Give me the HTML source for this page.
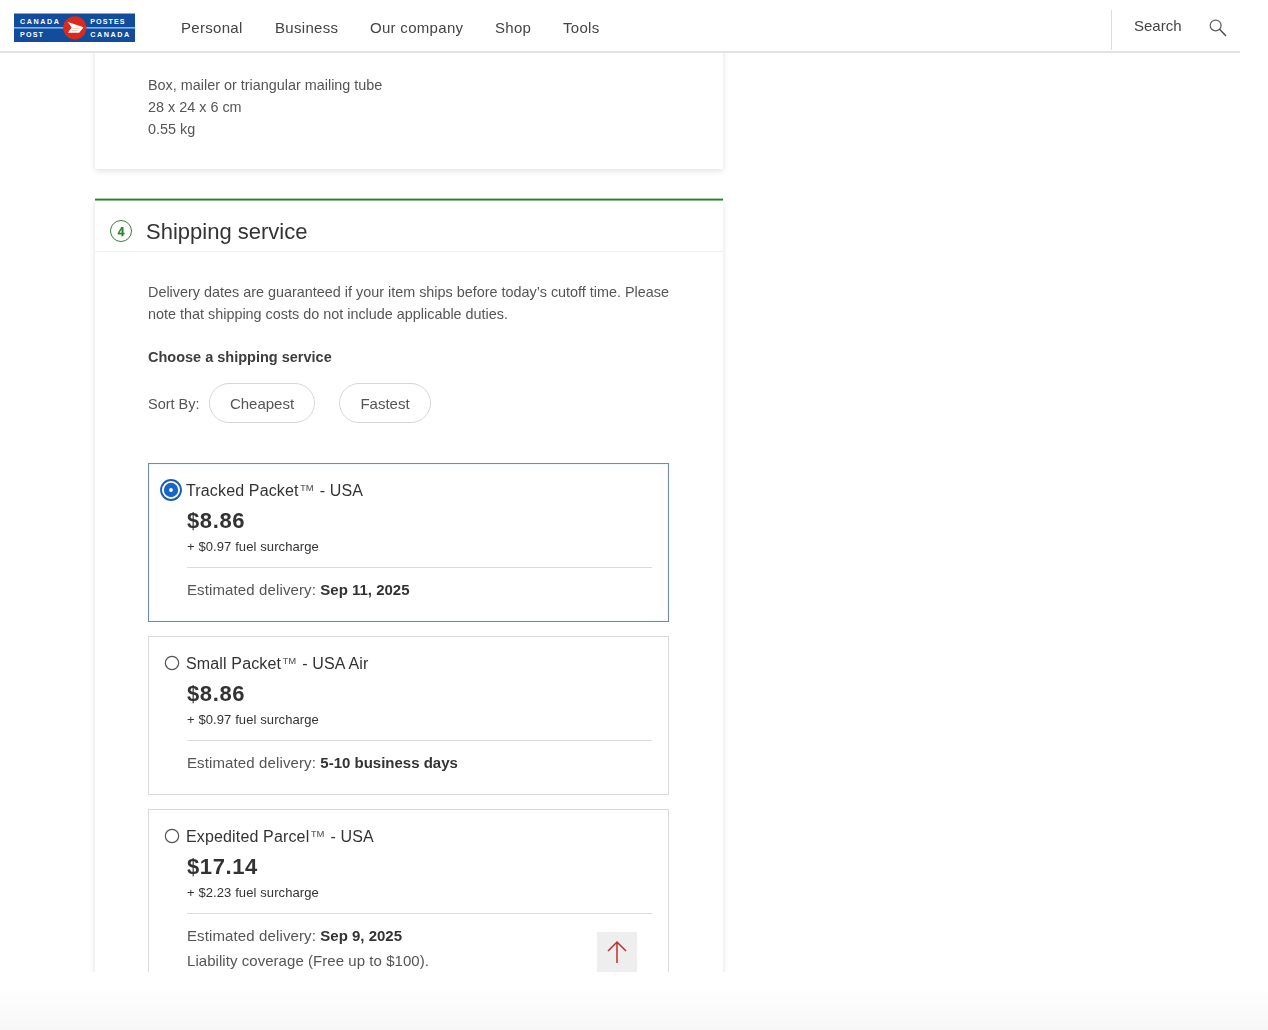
<!DOCTYPE html>
<html>
<head>
<meta charset="utf-8">
<style>
*{box-sizing:border-box;margin:0;padding:0}
html,body{width:1268px;height:1030px;overflow:hidden;background:#fff;font-family:"Liberation Sans",sans-serif;color:#333;-webkit-font-smoothing:antialiased}
.t,.nav,.pill,.opt{will-change:transform}
.abs{position:absolute}
#hdr{position:absolute;left:0;top:0;width:1240px;height:53px;border-bottom:2px solid #e2e2e2;background:#fff;z-index:5}
.nav{position:absolute;top:19px;font-size:15px;color:#444;white-space:nowrap;letter-spacing:0.3px}
.vsep{position:absolute;left:1111px;top:10px;width:1px;height:40px;background:#dcdcdc}
.card{position:absolute;left:95px;width:628px;background:#fff;box-shadow:0 2px 6px rgba(0,0,0,0.12)}
.t{position:absolute;white-space:nowrap}
.opt{position:absolute;left:148px;width:521px;border:1px solid #d9d9d9;background:#fff}
.opt.sel{border-color:#7088bb;box-shadow:inset 0 0 0 1px #f0f9ff}
.pill{position:absolute;top:383px;height:40px;border:1px solid #d6d6d6;border-radius:20px;font-size:15px;color:#555;line-height:40px;text-align:center}
#bot{position:absolute;left:0;top:972px;width:1268px;height:58px;background:linear-gradient(#fff 0px,#fff 16px,#fdfdfd 22px,#fbfbfb 36px,#f7f7f7 58px);z-index:6}
.ttl{left:37px;top:18.5px;font-size:16px;line-height:16px;color:#333;letter-spacing:0.15px}
.tm{color:#666;letter-spacing:0.5px;line-height:0}
.price{left:38px;top:46px;font-size:22px;line-height:22px;font-weight:bold;color:#333;letter-spacing:0.6px}
.sur{left:38px;top:76px;font-size:13px;line-height:13px;color:#333;letter-spacing:0.1px}
.div{left:38px;top:103px;width:465px;height:1px;background:#dcdcdc}
.est{left:38px;top:118px;font-size:15px;line-height:15px;color:#555;letter-spacing:0.12px}
.est b{color:#333;letter-spacing:0}
.liab{left:38px;top:143px;font-size:15px;line-height:15px;color:#555;letter-spacing:0.05px}
</style>
</head>
<body>
<div id="hdr">
  <svg class="abs" style="left:14px;top:13px" width="121" height="29" viewBox="0 0 121 29">
    <rect x="0" y="0.5" width="121" height="28.5" fill="#114c9d"/>
    <rect x="0" y="14" width="121" height="1.6" fill="#7cb6ec"/>
    <circle cx="60.8" cy="14.8" r="11.6" fill="#dc2a1a"/>
    <path d="M53.9 9 L69.6 14.3 L65.2 19.8 L53.9 19.8 L57.6 14.6 Z" fill="#fff"/>
    <path d="M58.5 15.3 H65.5 M58 17.6 H64" stroke="#f0b0a8" stroke-width="0.7"/>
    <g font-family="Liberation Sans" font-weight="bold" font-size="7.2" fill="#fff">
    <text x="6" y="11" textLength="39" lengthAdjust="spacing">CANADA</text>
    <text x="6" y="24.3" textLength="23" lengthAdjust="spacing">POST</text>
    <text x="76.3" y="11" textLength="34.3" lengthAdjust="spacing">POSTES</text>
    <text x="76.3" y="24.3" textLength="39" lengthAdjust="spacing">CANADA</text>
    </g>
  </svg>
  <div class="nav" style="left:181px">Personal</div>
  <div class="nav" style="left:275px">Business</div>
  <div class="nav" style="left:370px">Our company</div>
  <div class="nav" style="left:495px">Shop</div>
  <div class="nav" style="left:563px">Tools</div>
  <div class="vsep"></div>
  <div class="nav" style="left:1134px;top:17px;letter-spacing:0">Search</div>
  <svg class="abs" style="left:1208px;top:18px" width="22" height="22" viewBox="0 0 22 22">
    <circle cx="7.65" cy="7.45" r="5.45" fill="none" stroke="#606060" stroke-width="1.25"/>
    <line x1="11.6" y1="11.2" x2="18" y2="18" stroke="#444" stroke-width="1.3"/>
  </svg>
</div>

<!-- card 1 -->
<div class="card" style="top:-20px;height:189px"></div>
<div class="t" style="left:148px;top:74px;font-size:14.4px;line-height:22px;color:#555">Box, mailer or triangular mailing tube<br>28 x 24 x 6 cm<br>0.55 kg</div>

<!-- card 2 -->
<div class="card" style="top:198px;height:900px;box-shadow:0 4px 6px rgba(0,0,0,0.12)"></div><div class="abs" style="left:95px;top:198px;width:628px;height:3px;background:linear-gradient(#a6d6a0 0,#a6d6a0 1px,#34783a 1px,#34783a 2px,#8fb891 2px)"></div>
<div class="abs" style="left:95px;top:251px;width:628px;height:1px;background:#f1f1f1"></div>
<div class="abs" style="left:110px;top:220px;width:22px;height:22px;border:1.2px solid #3b7f3f;border-radius:50%;will-change:transform"></div><div class="t" style="left:110px;top:222px;width:22px;color:#2a832a;font-size:12px;font-weight:bold;text-align:center;line-height:21px;-webkit-text-stroke:0.25px #2a832a">4</div>
<div class="t" style="left:146px;top:218.5px;font-size:22px;color:#333">Shipping service</div>

<div class="t" style="left:148px;top:281px;font-size:14.4px;line-height:22px;color:#555">Delivery dates are guaranteed if your item ships before today’s cutoff time. Please<br>note that shipping costs do not include applicable duties.</div>
<div class="t" style="left:148px;top:349.2px;font-size:14.5px;font-weight:bold;color:#3d3d3d">Choose a shipping service</div>
<div class="t" style="left:148px;top:396px;font-size:14.5px;color:#555">Sort By:</div>
<div class="pill" style="left:209px;width:106px">Cheapest</div>
<div class="pill" style="left:339px;width:92px">Fastest</div>

<!-- option 1 -->
<div class="opt sel" style="top:463px;height:159px">
  <svg class="abs" style="left:10.3px;top:14px" width="24" height="24" viewBox="0 0 24 24"><circle cx="12" cy="12" r="9.95" fill="none" stroke="#1d5dae" stroke-width="1.9"/><circle cx="12" cy="12" r="7.2" fill="#1566c6"/><circle cx="12" cy="12" r="1.9" fill="#f4fdff"/></svg>
  <div class="t ttl">Tracked Packet<span class="tm">™</span> - USA</div>
  <div class="t price">$8.86</div>
  <div class="t sur">+ $0.97 fuel surcharge</div>
  <div class="abs div"></div>
  <div class="t est">Estimated delivery: <b>Sep 11, 2025</b></div>
  
</div>
<!-- option 2 -->
<div class="opt" style="top:636px;height:159px">
  <svg class="abs" style="left:14.5px;top:17.65px" width="16" height="16" viewBox="0 0 16 16"><circle cx="8" cy="8" r="6.65" fill="none" stroke="#555" stroke-width="1.2"/></svg>
  <div class="t ttl">Small Packet<span class="tm">™</span> - USA Air</div>
  <div class="t price">$8.86</div>
  <div class="t sur">+ $0.97 fuel surcharge</div>
  <div class="abs div"></div>
  <div class="t est">Estimated delivery: <b>5-10 business days</b></div>
  
</div>
<!-- option 3 -->
<div class="opt" style="top:809px;height:300px">
  <svg class="abs" style="left:14.5px;top:17.65px" width="16" height="16" viewBox="0 0 16 16"><circle cx="8" cy="8" r="6.65" fill="none" stroke="#555" stroke-width="1.2"/></svg>
  <div class="t ttl">Expedited Parcel<span class="tm">™</span> - USA</div>
  <div class="t price">$17.14</div>
  <div class="t sur">+ $2.23 fuel surcharge</div>
  <div class="abs div"></div>
  <div class="t est">Estimated delivery: <b>Sep 9, 2025</b></div>
  <div class="t liab">Liability coverage (Free up to $100).</div>
</div>
<div class="abs" style="left:597px;top:932px;width:40px;height:40px;background:#eeeeee;z-index:3">
  <svg class="abs" style="left:0;top:0" width="40" height="40" viewBox="0 0 40 40"><path d="M20 10 V31 M11 19 L20 10 L29 19" fill="none" stroke="#c0302c" stroke-width="1.5"/></svg>
</div>
<div id="bot"></div>
</body>
</html>
